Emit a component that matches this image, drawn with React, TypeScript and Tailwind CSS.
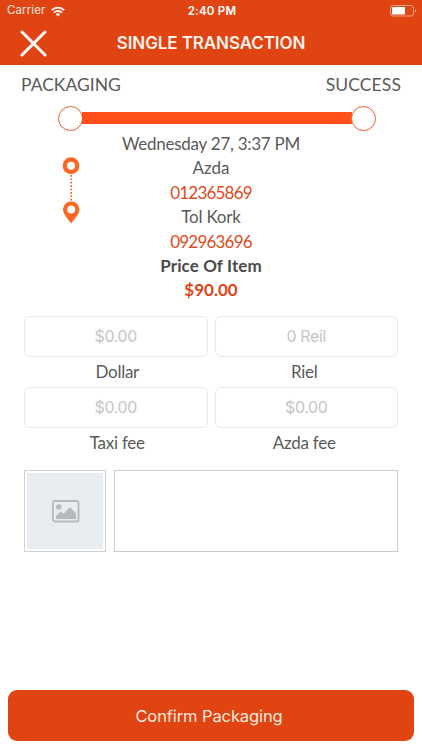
function StatusBar() {
  return (
    <div className="flex h-[22px] items-center justify-between pl-[7px] pr-[5px] text-white">
      <div className="flex flex-1 items-center gap-[6px]">
        <span className="text-[11.5px] tracking-[0.1px] text-[#ffe6dc]">Carrier</span>
        <svg width="14" height="11" viewBox="0 0 14 11" fill="none" stroke="#fff" strokeWidth="1.9">
          <path d="M0.8 4.1a9 9 0 0 1 12.4 0" />
          <path d="M3 6.6a5.8 5.8 0 0 1 8 0" />
          <path d="M7 10.6 4.9 8.4a3 3 0 0 1 4.2 0Z" fill="#fff" stroke="none" />
        </svg>
      </div>
      <span className="pt-px text-[11.5px] font-semibold tracking-[0.25px]">2:40 PM</span>
      <div className="flex flex-1 justify-end">
        <svg width="27" height="12" viewBox="0 0 27 12">
          <rect x="0.5" y="0.5" width="23" height="10.5" rx="2.5" fill="none" stroke="#f2a184" />
          <rect x="2" y="2" width="13" height="7.5" rx="0.8" fill="#fff" />
          <path d="M25 4v3.6c1.7-.6 1.7-3 0-3.6Z" fill="#f2a184" />
        </svg>
      </div>
    </div>
  );
}

function Header() {
  return (
    <header className="h-[65px] bg-[#e04412]">
      <StatusBar />
      <div className="grid h-[43px] grid-cols-[60px_1fr_60px] items-center">
        <svg className="ml-[20px]" width="27" height="27" viewBox="0 0 27 27" stroke="#fff" strokeWidth="3" strokeLinecap="round">
          <path d="M2 2 25 25M25 2 2 25" />
        </svg>
        <h1 className="text-center text-[17px] font-semibold tracking-[-0.1px] text-[#fff1eb]">SINGLE TRANSACTION</h1>
      </div>
    </header>
  );
}

function Progress() {
  return (
    <div className="ml-[58px] mr-[46px] flex h-[26px] items-center">
      <span className="size-[25px] shrink-0 rounded-full border-[1.5px] border-[#ec6230] bg-white" />
      <span className="-mx-[1px] h-[12px] flex-1 bg-[#ff5019]" />
      <span className="z-10 size-[25px] shrink-0 rounded-full border-[1.5px] border-[#ec6230] bg-white" />
    </div>
  );
}

function Field({ value, label, shift }: { value: string; label: string; shift: string }) {
  return (
    <label className="flex flex-col">
      <input
        className="h-[41px] w-full rounded-[6px] border border-[#e8e8e9] pb-[2px] text-center font-[Inter,sans-serif] text-[16px] tracking-[-0.4px] placeholder:text-[#c5c5ca]"
        placeholder={value}
      />
      <span className={`h-[30px] text-center text-[17px] leading-[30px] tracking-[-0.25px] ${shift}`}>{label}</span>
    </label>
  );
}

export default function App() {
  return (
    <div className="flex h-[750px] w-[422px] flex-col overflow-hidden bg-white font-[Inter,sans-serif]">
      <Header />
      <main className="flex flex-1 flex-col font-[Lato,sans-serif] text-[#5a5a5a]">
        <div className="flex h-[40px] items-center justify-between px-[21px] pt-px text-[17.5px]">
          <span>PACKAGING</span>
          <span className="tracking-[0.1px]">SUCCESS</span>
        </div>
        <Progress />
        <section className="grid h-[171px] grid-cols-[82px_1fr_82px]">
          <svg className="ml-[62px] mt-[25px]" width="18" height="68" viewBox="0 0 18 68">
            <circle cx="9" cy="9.7" r="6.2" fill="none" stroke="#ff6624" strokeWidth="4.4" />
            <path d="M9.2 19v27" stroke="#ff6624" strokeWidth="1.7" strokeDasharray="1.7 1.7" />
            <path fillRule="evenodd" fill="#ff6624" d="M9.2 45.4a8.2 8.2 0 0 0-8.2 8.2c0 4.8 5.4 9.6 8.2 14 2.8-4.4 8.2-9.2 8.2-14a8.2 8.2 0 0 0-8.2-8.2Zm0 4a4 4 0 1 1 0 8 4 4 0 0 1 0-8Z" />
          </svg>
          <div className="flex flex-col pt-px text-center text-[17px] leading-[24.4px]">
            <span className="tracking-[-0.26px]">Wednesday 27, 3:37 PM</span>
            <span>Azda</span>
            <span className="tracking-[-0.8px] text-[#df4a20]">012365869</span>
            <span className="tracking-[-0.2px]">Tol Kork</span>
            <span className="tracking-[-0.8px] text-[#df4a20]">092963696</span>
            <span className="font-bold tracking-[0.1px] text-[#4a4a4a]">Price Of Item</span>
            <span className="font-bold text-[#df4516]">$90.00</span>
          </div>
        </section>
        <section className="ml-[24px] mr-[24px] mt-[14px] grid grid-cols-2 gap-x-[7px] gap-y-0">
          <Field value="$0.00" label="Dollar" shift="pl-[3px]" />
          <Field value="0 Reil" label="Riel" shift="pr-[4px]" />
          <Field value="$0.00" label="Taxi fee" shift="pl-[3px]" />
          <Field value="$0.00" label="Azda fee" shift="pr-[4px]" />
        </section>
        <section className="mx-[24px] mt-[12px] flex h-[82px] gap-[8px]">
          <button className="w-[82px] border border-[#cfd2d3] p-[2px]">
            <span className="flex h-full items-center justify-center bg-[#e7edf0]">
              <svg className="ml-px" width="28" height="23" viewBox="0 0 28 23">
                <rect x="1" y="1" width="25.5" height="20.5" rx="1.8" fill="none" stroke="#b6babc" strokeWidth="1.8" />
                <circle cx="6.8" cy="7" r="2.8" fill="#b6babc" />
                <path d="M4 19v-3l4.8-4.6 2.7 2.6 6.5-7 6 6.3V19Z" fill="#b6babc" />
              </svg>
            </span>
          </button>
          <textarea className="flex-1 resize-none border border-[#cdcdcd]" />
        </section>
      </main>
      <button className="mx-[8px] mb-[9px] h-[51px] rounded-[9px] bg-[#e04412] pt-[2px] pr-[4px] text-[16.5px] tracking-[-0.1px] text-[#ffe9df]">Confirm Packaging</button>
    </div>
  );
}
